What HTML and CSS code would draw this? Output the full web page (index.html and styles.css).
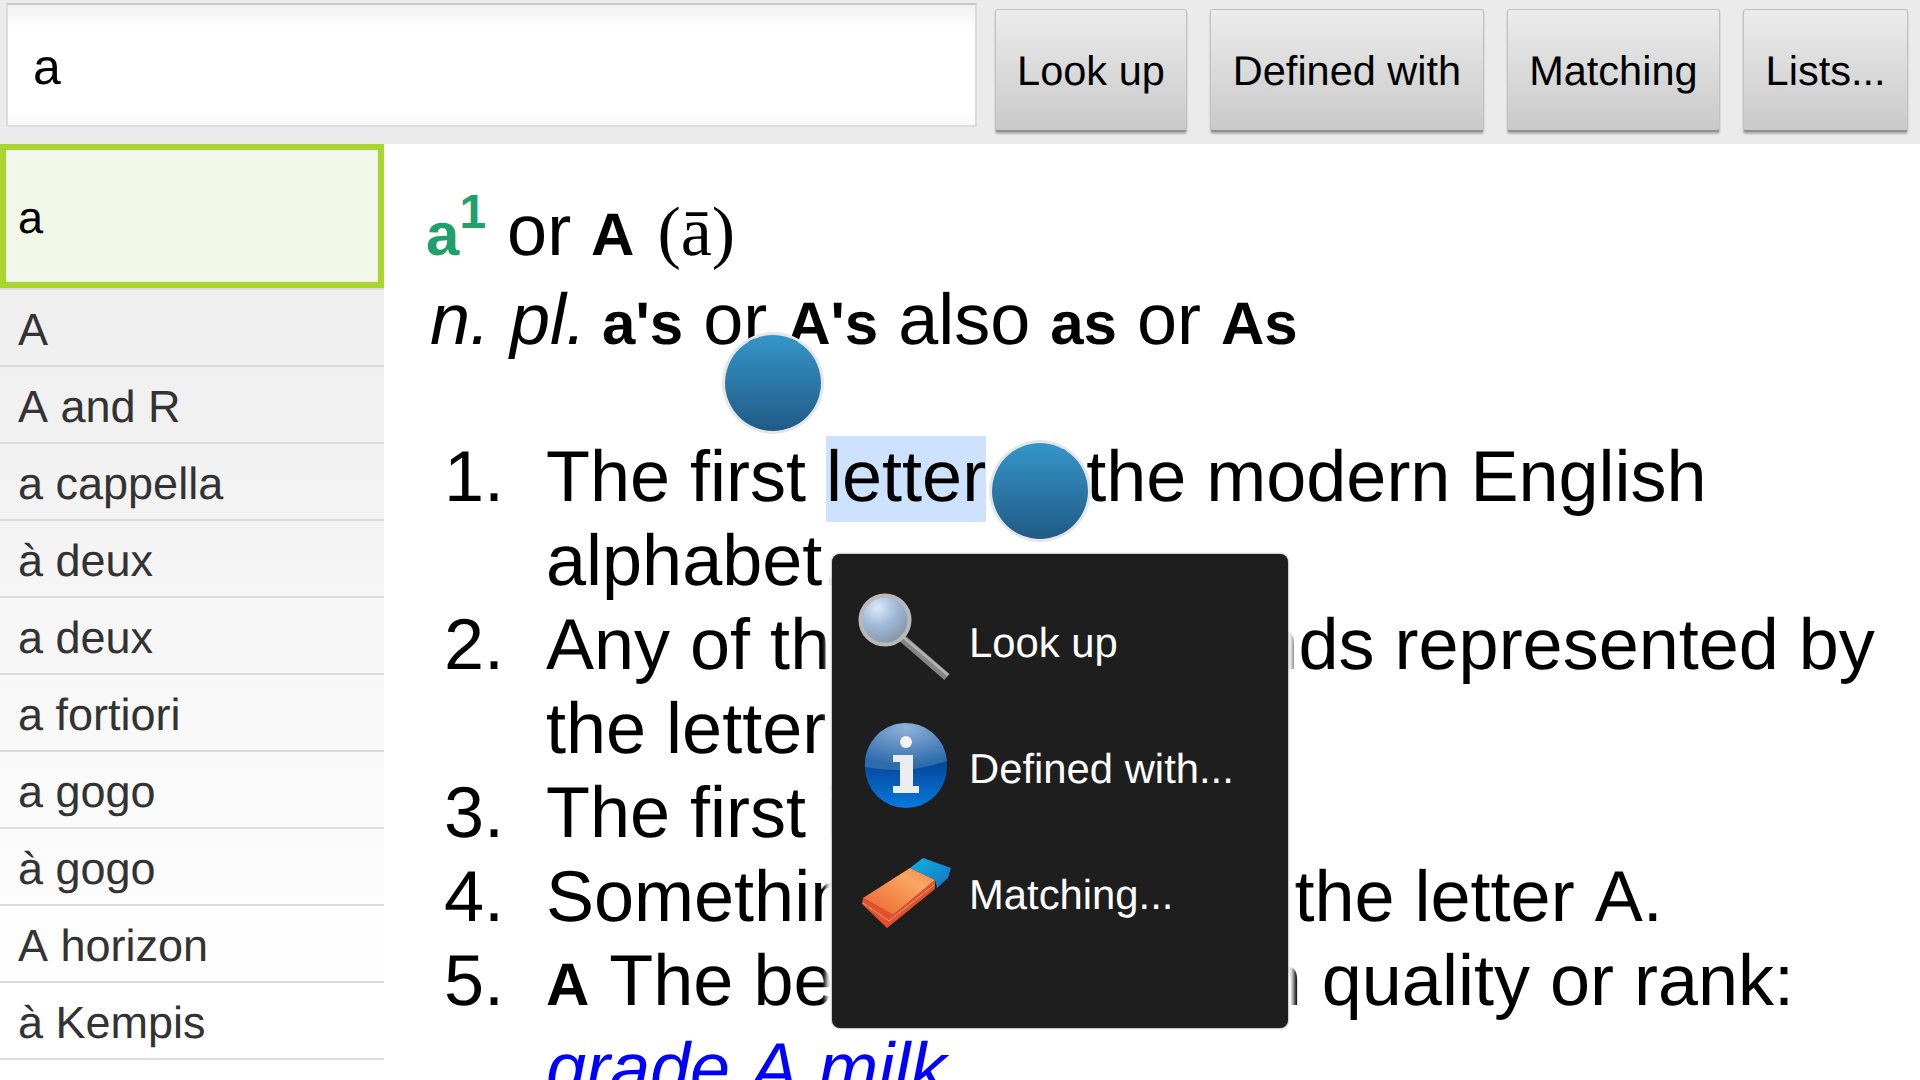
FILE: index.html
```html
<!DOCTYPE html>
<html lang="en">
<head>
    <meta charset="UTF-8">
    <title>Dictionary</title>
    <link rel="stylesheet" href="styles.css">
</head>
<body>
    <header class="top-bar">
        <input class="search-box" type="text" value="a">
        <button class="bar-btn">Look up</button>
        <button class="bar-btn">Defined with</button>
        <button class="bar-btn">Matching</button>
        <button class="bar-btn">Lists...</button>
    </header>

    <div class="content">
        <ul class="word-list">
            <li class="word selected">a</li>
            <li class="word">A</li>
            <li class="word">A and R</li>
            <li class="word">a cappella</li>
            <li class="word">à deux</li>
            <li class="word">a deux</li>
            <li class="word">a fortiori</li>
            <li class="word">a gogo</li>
            <li class="word">à gogo</li>
            <li class="word">A horizon</li>
            <li class="word">à Kempis</li>
        </ul>

        <main class="entry">
            <div class="headword"><b class="hw">a<sup>1</sup></b> or <b class="small-bold">A</b> <span class="pron">(ā)</span></div>
            <div class="forms"><i>n. pl.</i> <b class="small-bold">a's</b> or <b class="small-bold">A's</b> also <b class="small-bold">as</b> or <b class="small-bold">As</b></div>

            <ol class="senses">
                <li class="sense"><span class="num">1.</span><div>The first <span class="picked">letter</span> of the modern English alphabet.</div></li>
                <li class="sense"><span class="num">2.</span><div>Any of the speech sounds represented by the letter a.</div></li>
                <li class="sense"><span class="num">3.</span><div>The first in a series.</div></li>
                <li class="sense"><span class="num">4.</span><div>Something shaped like the letter A.</div></li>
                <li class="sense"><span class="num">5.</span><div><b class="small-bold">A</b> The best or highest in quality or rank: <a class="example">grade A milk</a></div></li>
            </ol>
        </main>
    </div>

    <span class="handle handle-start"></span>
    <span class="handle handle-end"></span>

    <div class="popup">
        <div class="popup-row">
            <svg class="popup-icon" viewBox="0 0 100 100">
                <defs>
                    <radialGradient id="lens" cx="0.35" cy="0.25" r="0.85">
                        <stop offset="0" stop-color="#dbe8fa"/>
                        <stop offset="0.45" stop-color="#9fb9d8"/>
                        <stop offset="1" stop-color="#7f8c9c"/>
                    </radialGradient>
                    <radialGradient id="infoTop" cx="0.5" cy="0.1" r="0.8">
                        <stop offset="0" stop-color="#8fb2d6"/>
                        <stop offset="1" stop-color="#2f6cae"/>
                    </radialGradient>
                    <linearGradient id="infoBottom" x1="0" y1="0" x2="0" y2="1">
                        <stop offset="0.45" stop-color="#04479a"/>
                        <stop offset="1" stop-color="#0a78e0"/>
                    </linearGradient>
                    <linearGradient id="rubberTop" x1="0" y1="1" x2="1" y2="0">
                        <stop offset="0" stop-color="#e8622c"/>
                        <stop offset="0.7" stop-color="#fba562"/>
                        <stop offset="1" stop-color="#f58a48"/>
                    </linearGradient>
                    <linearGradient id="rubberBlue" x1="0" y1="0" x2="1" y2="1">
                        <stop offset="0" stop-color="#0cb4e4"/>
                        <stop offset="1" stop-color="#1a6fc0"/>
                    </linearGradient>
                </defs>
                <path d="M46 47 L91 86" stroke="#858585" stroke-width="8"/>
                <path d="M46 45 L92 84" stroke="#b5b5b5" stroke-width="2.5"/>
                <circle cx="29" cy="29" r="24.5" fill="url(#lens)" stroke="#b9b9b9" stroke-width="4"/>
            </svg>
            <span>Look up</span>
        </div>
        <div class="popup-row">
            <svg class="popup-icon" viewBox="0 0 100 100">
                <circle cx="50" cy="50" r="41" fill="url(#infoBottom)"/>
                <path d="M9 50 A41 41 0 0 1 91 44 Q50 58 9 50 Z" fill="url(#infoTop)"/>
                <circle cx="50" cy="25" r="6" fill="#f2f2f2"/>
                <path d="M37 38 H57 V69 H63 V76 H37 V69 H44 V45 H37 Z" fill="#ececec"/>
            </svg>
            <span>Defined with...</span>
        </div>
        <div class="popup-row">
            <svg class="popup-icon" viewBox="0 0 100 100">
                <path d="M54 25 L67 15 L95 25 L92 35 L81 45 L79 37 Z" fill="url(#rubberBlue)"/>
                <path d="M6 61 L31 85 L79 46 L79 37 L37 72 L7 55 Z" fill="#e5502a"/>
                <path d="M7 55 L54 25 L79 37 L37 72 Z" fill="url(#rubberTop)"/>
                <path d="M7 60 L33 78 L78 42" fill="none" stroke="#f9d4bd" stroke-width="1" stroke-dasharray="2 1"/>
            </svg>
            <span>Matching...</span>
        </div>
    </div>
</body>
</html>
```

FILE: styles.css
```css
html, body {
    margin: 0;
    padding: 0;
    height: 100%;
    overflow: hidden;
}

body {
    font-family: 'Liberation Sans', Arial, sans-serif;
    background-color: #fff;
    color: #000;
    position: relative;
    text-rendering: geometricPrecision;
    font-kerning: none;
}

/* top bar */
.top-bar {
    display: flex;
    align-items: flex-start;
    height: 144px;
    box-sizing: border-box;
    padding: 3px 12px 0 6px;
    background-color: #ebebeb;
}

.search-box {
    flex: 1;
    min-width: 0;
    height: 124px;
    box-sizing: border-box;
    margin: 0 18px 0 0;
    padding: 4px 0 0 25px;
    border: 2px solid #dcdcdc;
    border-top-color: #c9c9c9;
    background: linear-gradient(#f1f1f1, #fff 22%, #fff 90%, #f6f6f6);
    font-family: inherit;
    font-size: 50px;
    color: #000;
    outline: none;
    text-rendering: geometricPrecision;
}

.bar-btn {
    height: 123px;
    margin: 6px 23px 0 0;
    padding: 2px 21.5px 0;
    border: 1px solid #c2c2c2;
    border-bottom: 2px solid #8e8e8e;
    border-radius: 3px;
    background: linear-gradient(#ececec, #c9c9c9);
    box-shadow: 0 2px 2px rgba(0, 0, 0, 0.25);
    font-family: inherit;
    font-size: 41.5px;
    color: #000;
    text-rendering: geometricPrecision;
    font-kerning: none;
}

.bar-btn:last-child {
    margin-right: 0;
}

.content {
    display: flex;
}

/* word list */
.word-list {
    flex: 0 0 384px;
    height: 936px;
    margin: 0;
    padding: 0;
    list-style: none;
    background: linear-gradient(#eee 15%, #fff 91%);
}

.word {
    display: flex;
    align-items: center;
    box-sizing: border-box;
    height: 77px;
    padding: 4px 0 0 18px;
    border-bottom: 2px solid #dcdcdc;
    font-size: 45px;
    color: #333;
}

.word.selected {
    height: 144px;
    margin-bottom: 2px;
    padding: 4px 0 0 12px;
    border: 6px solid #a8d52e;
    background-color: #f1f8e8;
    box-shadow: inset 0 0 0 1px #e9efe0, inset 0 0 6px 3px #f6f6f4, 0 2px 0 #dcdcdc;
    color: #000;
}

/* dictionary entry */
.entry {
    flex: 1;
    min-width: 0;
    padding: 44px 20px 0 42px;
    font-size: 72px;
}

.headword {
    height: 89px;
    line-height: 87px;
    white-space: nowrap;
}

.hw {
    color: #21a06b;
    font-size: 60px;
}

.hw sup {
    margin-right: 1px;
    font-size: 48px;
    line-height: 0;
    vertical-align: 27px;
}

.small-bold {
    font-size: 60px;
}

.pron {
    margin-left: 3px;
    font-family: 'Liberation Serif', serif;
    font-size: 70px;
}

.forms {
    height: 87px;
    line-height: 87px;
    margin-left: 4px;
    white-space: nowrap;
}

.forms i {
    margin-right: -4px;
}

.senses {
    margin: 71px 0 0;
    padding: 0;
    list-style: none;
}

.sense {
    display: flex;
    line-height: 84px;
}

.num {
    flex: 0 0 78px;
    margin-right: 42px;
    text-align: right;
}

.picked {
    padding: 1px 0 5px;
    background-color: #cce2ff;
}

.example {
    color: #00f;
    font-style: italic;
}

/* selection handles */
.handle {
    position: absolute;
    width: 96px;
    height: 96px;
    border-radius: 50%;
    background: linear-gradient(#3596c8, #205a86);
    box-shadow: 0 0 0 3px #e6e6e6;
}

.handle-start {
    left: 725px;
    top: 335px;
}

.handle-end {
    left: 992px;
    top: 443px;
}

/* context menu */
.popup {
    position: absolute;
    left: 832px;
    top: 554px;
    width: 456px;
    height: 474px;
    box-sizing: border-box;
    padding-top: 24px;
    border-radius: 8px;
    background-color: #1e1e1e;
    box-shadow: 0 0 2px rgba(0, 0, 0, 0.7), 0 0 4px 6px rgba(255, 255, 255, 0.95);
    color: #fff;
    font-size: 41.8px;
}

.popup-row {
    display: flex;
    align-items: center;
    height: 126px;
    padding-left: 24px;
}

.popup-row span {
    padding-top: 4px;
}

.popup-icon {
    width: 100px;
    height: 100px;
    margin-right: 13px;
}
```
